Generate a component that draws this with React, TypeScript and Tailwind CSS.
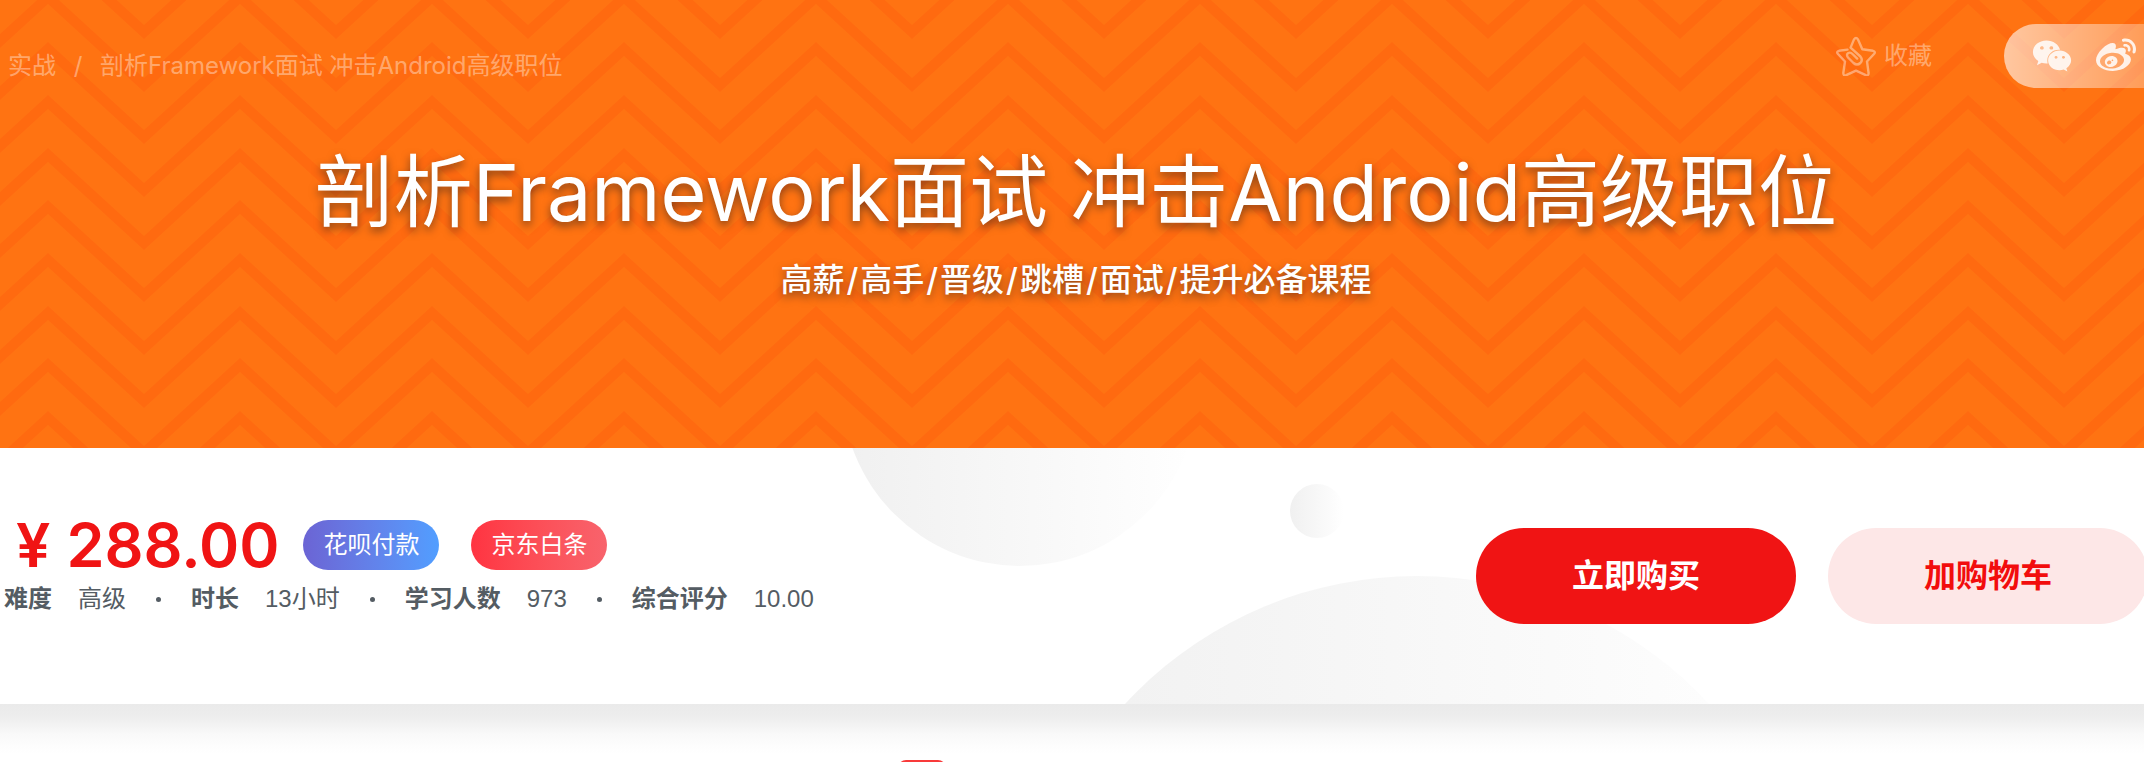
import React from "react";
import { FaWeibo, FaWeixin } from "react-icons/fa";

const COURSE_TITLE = "剖析Framework面试 冲击Android高级职位";

const TOPICS = ["高薪", "高手", "晋级", "跳槽", "面试", "提升必备课程"];

const FACTS = [
  { label: "难度", value: "高级" },
  { label: "时长", value: "13小时" },
  { label: "学习人数", value: "973" },
  { label: "综合评分", value: "10.00" },
];

const PEAKS = [-116, -63, -10, 42, 95, 148];

function ZigzagPattern() {
  return (
    <svg className="absolute inset-0 h-full w-full" aria-hidden="true">
      <defs>
        <pattern id="zigzag" width="192" height="158" patternUnits="userSpaceOnUse">
          {PEAKS.map((y) => (
            <path
              key={y}
              d={`M-48 ${y + 88} L48 ${y} L144 ${y + 88} L240 ${y} V${y + 14} L144 ${y + 102} L48 ${y + 14} L-48 ${y + 102}Z`}
              fill="#ff6a10"
            />
          ))}
        </pattern>
      </defs>
      <rect width="100%" height="100%" fill="url(#zigzag)" />
    </svg>
  );
}

function StarClipIcon() {
  return (
    <svg
      className="size-10"
      viewBox="0 0 40 40"
      fill="none"
      stroke="currentColor"
      strokeWidth="2.4"
      strokeLinecap="round"
      strokeLinejoin="round"
      aria-hidden="true"
    >
      <path d="M11.5 13.6 L3 14.8 Q0 15.6 2 18 L9 25.5 L7.3 37 Q7.4 40.2 10.2 39.2 L20 34.6 L29.8 39.2 Q32.6 40.2 32.6 37 L31 25.5 L38 18 Q40 15.6 37 14.8 L26.3 13.2 L22 3.4 Q20 .6 18 3.4 L14.6 11.6 L24.4 20.5 Q27.2 24 24.4 27 Q21 30 17.5 27 L12 21.5 Q9.8 18.6 12.3 17 Q14.5 15.9 16.5 18 L21.2 22.6" />
    </svg>
  );
}

function Hero() {
  return (
    <header className="relative h-[448px] overflow-hidden bg-[#ff7312]">
      <ZigzagPattern />
      <div className="relative pl-2">
        <div className="flex items-start pt-6">
          <nav
            aria-label="面包屑"
            className="flex pt-[26px] font-['Inter','Noto_Sans_CJK_SC',sans-serif] text-2xl text-white/40"
          >
            <a href="#practice">实战</a>
            <span className="w-11 text-center">/</span>
            <a href="#course">{COURSE_TITLE}</a>
          </nav>
          <button type="button" className="ml-auto flex h-16 items-center gap-2 text-2xl text-white/40">
            <StarClipIcon />
            收藏
          </button>
          <div className="ml-[72px] flex h-16 w-[140px] items-center gap-6 rounded-l-full bg-linear-to-r from-white/60 to-white/30 pl-7 text-white/85">
            <a href="#wechat" aria-label="微信">
              <FaWeixin className="size-10" />
            </a>
            <a href="#weibo" aria-label="微博">
              <FaWeibo className="size-10" />
            </a>
          </div>
        </div>
        <h1 className="mt-14 text-center font-['Inter','Noto_Sans_CJK_SC',sans-serif] text-[79px] leading-[96px] font-normal text-white [text-shadow:0_4px_8px_rgba(7,17,27,0.5)]">
          {COURSE_TITLE}
        </h1>
        <p className="mt-5 text-center text-[32px] leading-10 font-medium text-white [text-shadow:0_4px_8px_rgba(7,17,27,0.5)]">
          {TOPICS.map((topic, i) => (
            <React.Fragment key={topic}>
              {i > 0 && <span className="mx-0.5 font-['Inter']">/</span>}
              {topic}
            </React.Fragment>
          ))}
        </p>
      </div>
    </header>
  );
}

function PurchasePanel() {
  return (
    <section className="relative h-64 bg-white">
      <div className="absolute inset-0 overflow-hidden" aria-hidden="true">
        <div className="absolute -top-[238px] left-[calc(50%-230px)] size-[356px] rounded-full bg-linear-to-r from-[#f0f0f0] to-white" />
        <div className="absolute top-9 left-[calc(50%+218px)] size-[54px] rounded-full bg-linear-to-r from-[#f0f0f0] to-white" />
        <div className="absolute top-32 left-[calc(50%-52px)] size-[794px] rounded-full bg-linear-to-r from-[#f0f0f0] to-white" />
      </div>
      <div className="relative -mr-1 flex h-full items-center justify-between pl-1">
        <div className="self-start pt-[72px]">
          <div className="flex h-[50px] items-center text-2xl text-white">
            <strong className="pl-3 font-['Inter'] text-[61px] leading-[46px] font-semibold text-[#f01414]">
              <span className="mr-4">¥</span>288.00
            </strong>
            <span className="ml-6 flex h-[50px] items-center rounded-full bg-linear-to-r from-[#6b64d4] to-[#519eff] px-5">
              花呗付款
            </span>
            <span className="ml-8 flex h-[50px] items-center rounded-full bg-linear-to-r from-[#ff3341] to-[#f8636c] px-5">
              京东白条
            </span>
          </div>
          <dl className="mt-[17px] flex text-2xl leading-6 text-[#545c63]">
            {FACTS.map((fact, i) => (
              <div key={fact.label} className="flex items-center">
                {i > 0 && (
                  <span className="flex w-[65px] justify-center" aria-hidden="true">
                    <span className="size-[5px] rounded-full bg-[#545c63]" />
                  </span>
                )}
                <dt className="font-bold">{fact.label}</dt>
                <dd className="ml-[26px]">{fact.value}</dd>
              </div>
            ))}
          </dl>
        </div>
        <div className="flex gap-8 text-[32px] font-bold">
          <button type="button" className="h-24 w-80 rounded-full bg-[#f01414] text-white">
            立即购买
          </button>
          <button type="button" className="h-24 w-80 rounded-full bg-[#fde7e7] text-[#f20d0d]">
            加购物车
          </button>
        </div>
      </div>
    </section>
  );
}

export default function App() {
  return (
    <div
      lang="zh-CN"
      className="min-h-screen overflow-hidden bg-white font-['Liberation_Sans','Noto_Sans_CJK_SC',sans-serif]"
    >
      <Hero />
      <PurchasePanel />
      <section className="h-[58px] overflow-hidden bg-[linear-gradient(#eaeaea,#ededed_12px,#f2f2f2_20px,#f9f9f9_30px,#fdfdfd_42px,#fff_50px)] pt-14 pl-[42%]">
        <div className="-ml-0.5 h-8 w-12 rounded-t-lg bg-[#f83a3a]" />
      </section>
    </div>
  );
}
